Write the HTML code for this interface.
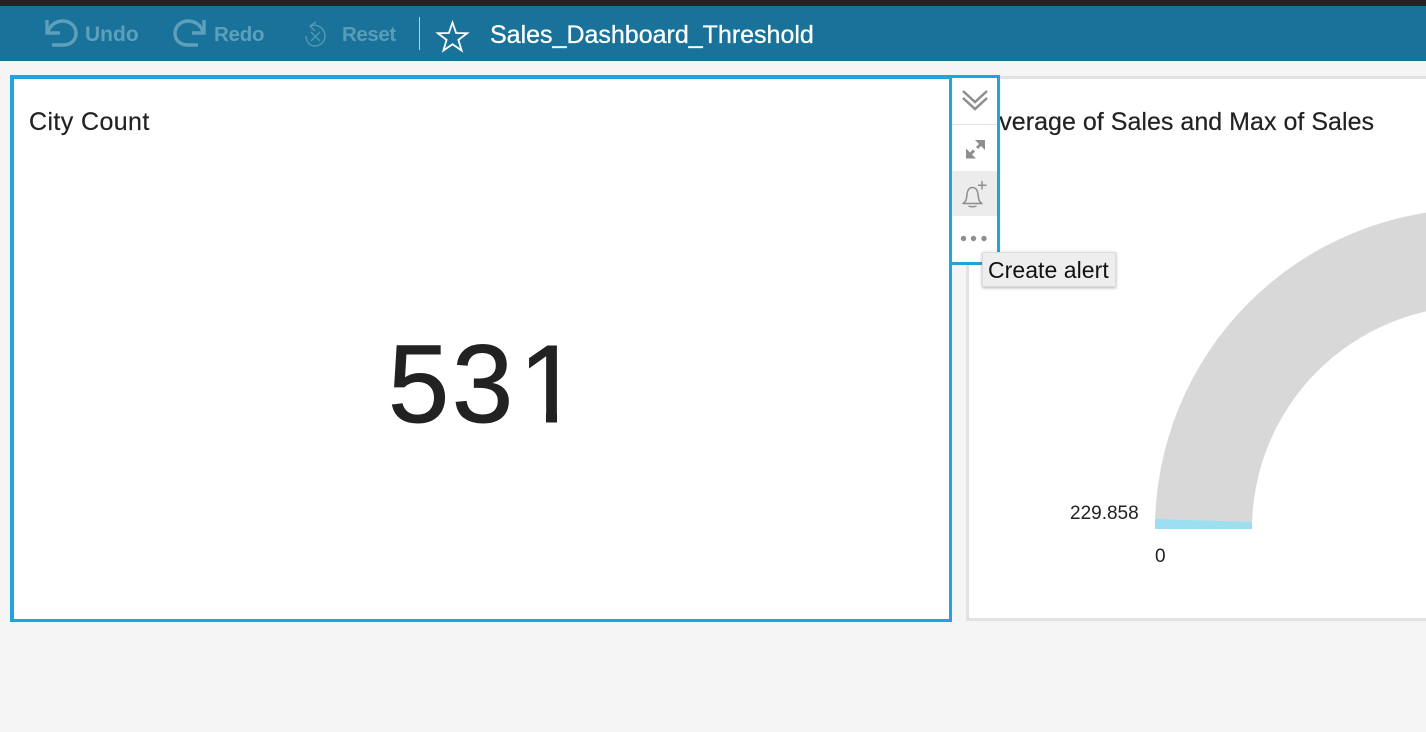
<!DOCTYPE html>
<html><head><meta charset="utf-8"><style>
html,body{margin:0;padding:0;width:1426px;height:732px;overflow:hidden;background:#f5f5f5;font-family:"Liberation Sans",sans-serif;color:#222}
div,span{position:absolute;white-space:nowrap}
svg{position:absolute;left:0;top:0}
</style></head><body>
<div style="left:0;top:0;width:1426px;height:6px;background:#232323"></div>
<div style="left:0;top:6px;width:1426px;height:55px;background:#187299"></div>
<div style="left:85px;top:21px;font-size:21px;line-height:28px;font-weight:700;color:#5da0bb">Undo</div>
<div style="left:214px;top:21px;font-size:20.500px;line-height:28px;font-weight:700;color:#5da0bb;letter-spacing:-.25px">Redo</div>
<div style="left:342px;top:21px;font-size:20.500px;line-height:28px;font-weight:700;color:#5a9cb8;letter-spacing:-.4px">Reset</div>
<div style="left:419px;top:17px;width:1px;height:33px;background:#b9d3dd"></div>
<div style="left:490px;top:19px;font-size:25px;line-height:32px;font-weight:400;color:#fff;-webkit-text-stroke:.3px #fff">Sales_Dashboard_Threshold</div>

<div style="left:966px;top:76px;width:500px;height:539px;border:3px solid #e2e2e2;background:#fff"></div>
<div style="left:10px;top:75px;width:935px;height:540px;border:solid #1fa4dc;border-width:4px 3px 3px 4px;background:#fff"></div>
<div style="left:29px;top:107px;font-size:25px;line-height:30px;letter-spacing:.4px;-webkit-text-stroke:.2px #222">City Count</div>
<div style="left:997px;top:107px;width:429px;height:30px;overflow:hidden"><span style="left:-14px;top:0;font-size:25px;line-height:30px;letter-spacing:.03px;-webkit-text-stroke:.2px #222">Average of Sales and Max of Sales</span></div>
<div style="left:388px;top:327px;font-size:110px;line-height:116px;-webkit-text-stroke:1px #222">5</div>
<div style="left:452px;top:327px;font-size:110px;line-height:116px;-webkit-text-stroke:1px #222">3</div>
<div style="left:519px;top:327px;font-size:110px;line-height:116px;-webkit-text-stroke:1px #222">1</div>
<div style="left:522px;top:413px;width:24px;height:12px;background:#fff"></div>
<div style="left:557px;top:413px;width:24px;height:12px;background:#fff"></div>
<div style="left:1070px;top:503px;font-size:19px;line-height:22px">229.858</div>
<div style="left:1155px;top:546px;font-size:19px;line-height:22px">0</div>

<svg width="1426" height="732" viewBox="0 0 1426 732" fill="none">
<path d="M1155 529A320 320 0 0 1 1475 209V306A223 223 0 0 0 1252 529Z" fill="#d8d8d8"/>
<path d="M1155 519L1252 522V529H1155Z" fill="#9ddff2"/>
<g stroke="#5da0bb" stroke-width="3.400">
<path d="M47 20V33H60"/><path d="M48 32C50 25 56 21 63 21C71 21 76 27 76 33.500C76 40 71 45 63 45H52"/>
<path d="M204 20V33H192"/><path d="M203 32C201 25 195 21 188 21C180 21 175 27 175 33.500C175 40 180 45 188 45H198"/>
</g>
<g stroke="#5597b3" stroke-width="1.400">
<path d="M310 26C318 23 325 29 325 36C325 42 320 46 315 46C310 46 306 42 306 36"/><path d="M316 22L310 26L315 31"/><path d="M311 32L320 41M320 32L311 41"/>
</g>
<path d="M452.500 22.500L456.100 33L467.200 33.200L458.400 39.900L461.600 50.500L452.500 44.200L443.400 50.500L446.600 39.900L437.800 33.200L448.900 33Z" stroke="#fff" stroke-width="1.800" stroke-linejoin="miter"/>
</svg>

<div style="left:949px;top:75px;width:45px;height:184px;border:3px solid #1fa4dc;background:#fff"></div>
<div style="left:952px;top:124px;width:45px;height:1px;background:#e3e3e3"></div>
<div style="left:952px;top:171px;width:45px;height:45px;background:#ececec"></div>
<svg width="1426" height="732" viewBox="0 0 1426 732" fill="none">
<g stroke="#8e8e8e" stroke-width="2.500"><path d="M963 91L975 102L987 91"/><path d="M963 98L975 109L987 98"/></g>
<g fill="#8e8e8e"><path d="M985 140V150L975 140Z"/><path d="M966 158.500V148.500L976 158.500Z"/>
<circle cx="963.500" cy="238.500" r="2.700"/><circle cx="973.500" cy="238.500" r="2.700"/><circle cx="984" cy="238.500" r="2.700"/></g>
<g stroke="#8e8e8e" stroke-width="3"><path d="M981 144L977 148"/><path d="M970 154.500L974 150.500"/></g>
<g stroke="#8e8e8e" stroke-width="1.500"><path d="M963 203.500C966.500 201.500 966.500 198 967 194.500C967.500 190 969.500 187.500 972.500 187.500C975.500 187.500 977.500 190 978 194.500C978.500 198 978.500 201.500 982 203.500Z" stroke-linejoin="round"/><path d="M968.500 206C970.500 207 974.500 207 976.500 206"/><path d="M982 181V189.500M978 185.300H986.500"/></g>
</svg>
<div style="left:982px;top:252px;width:132px;height:33px;background:#eee;border:1px solid #dcdcdc;box-shadow:0 1px 3px rgba(0,0,0,.3)"></div>
<div style="left:988px;top:257px;font-size:23px;line-height:27px;color:#111;letter-spacing:.05px">Create alert</div>
</body></html>
